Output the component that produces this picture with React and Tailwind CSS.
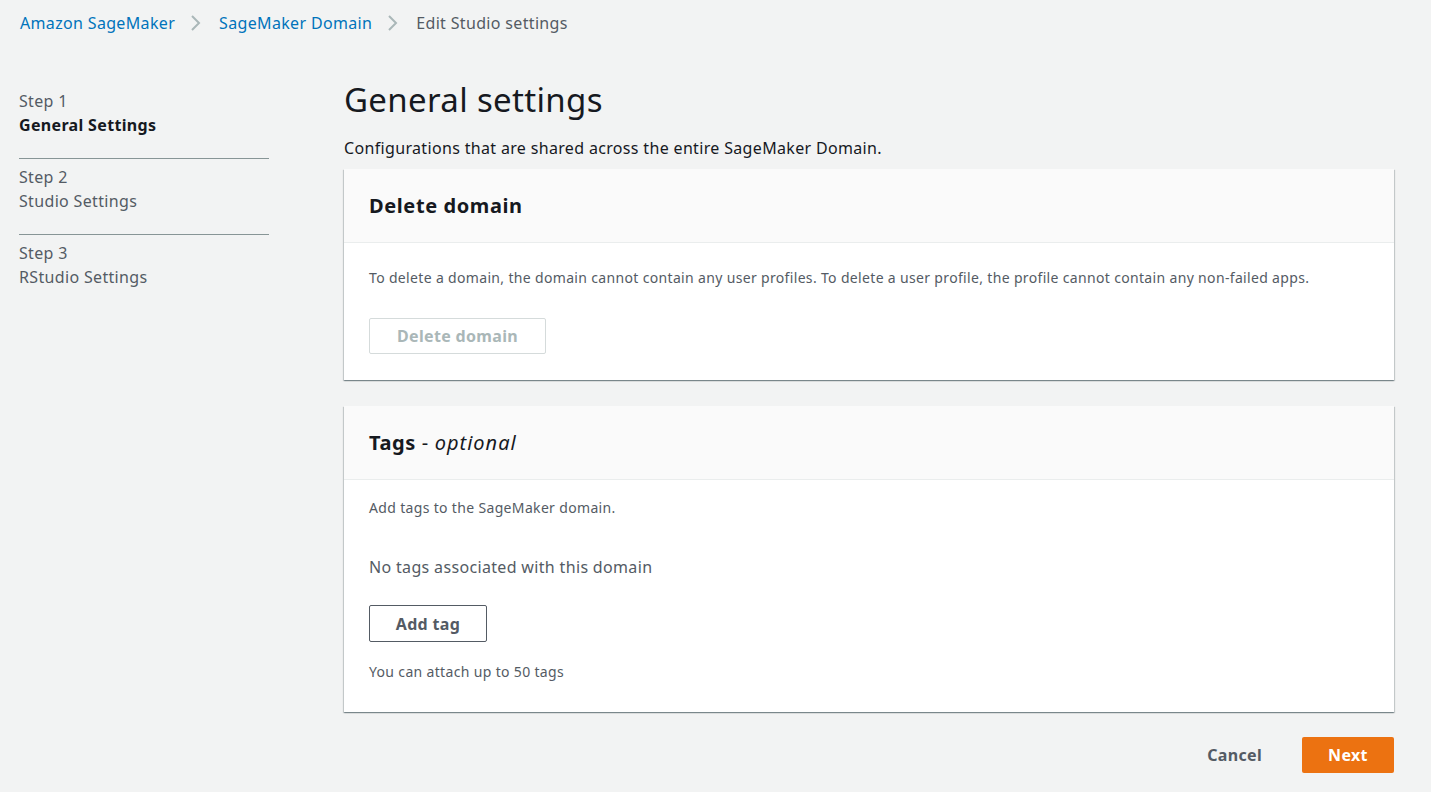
export default function App() {
  return (
    <div className="min-h-screen bg-[#f2f3f3] font-['Noto_Sans',sans-serif] tracking-[0.021em] text-[#16191f]">
      <nav className="flex items-center h-[46px] px-5 text-[16px] leading-[22px]">
        <span className="text-[#0073bb]">Amazon SageMaker</span>
        <Chevron />
        <span className="text-[#0073bb]">SageMaker Domain</span>
        <Chevron />
        <span className="text-[#545b64]">Edit Studio settings</span>
      </nav>

      <div className="flex pl-[19px] pr-[37px]">
        <aside className="w-[250px] shrink-0 pt-[43px] text-[16px] leading-[24px]">
          <div className="pb-[21px] border-b border-[#879596]">
            <div className="text-[#545b64]">Step 1</div>
            <div className="font-bold text-[#16191f]">General Settings</div>
          </div>
          <div className="pt-[6px] pb-[21px] border-b border-[#879596]">
            <div className="text-[#545b64]">Step 2</div>
            <div className="text-[#545b64]">Studio Settings</div>
          </div>
          <div className="pt-[6px]">
            <div className="text-[#545b64]">Step 3</div>
            <div className="text-[#545b64]">RStudio Settings</div>
          </div>
        </aside>

        <main className="ml-[75px] flex-1">
          <h1 className="mt-[32px] text-[33px] leading-[44px] font-normal">General settings</h1>
          <p className="mt-[15px] text-[16px] leading-[22px]">Configurations that are shared across the entire SageMaker Domain.</p>

          <section className="mt-[10px] bg-white shadow-[0_1px_1px_0_rgba(0,28,36,0.3),1px_1px_1px_0_rgba(0,28,36,0.15),-1px_1px_1px_0_rgba(0,28,36,0.15)]">
            <div className="bg-[#fafafa] border-b border-[#eaeded] h-[74px] flex items-center px-[25px]">
              <h2 className="text-[20px] font-bold leading-[28px] tracking-[0.03em]">Delete domain</h2>
            </div>
            <div className="px-[25px] pt-[25px] pb-[26px]">
              <p className="text-[14px] leading-[20px] text-[#545b64]">
                To delete a domain, the domain cannot contain any user profiles. To delete a user profile, the profile cannot contain any non-failed apps.
              </p>
              <button className="mt-[30px] h-[36px] w-[177px] border border-[#d5dbdb] rounded-[2px] bg-white text-[16px] font-bold text-[#aab7b8]">
                Delete domain
              </button>
            </div>
          </section>

          <section className="mt-[26px] bg-white shadow-[0_1px_1px_0_rgba(0,28,36,0.3),1px_1px_1px_0_rgba(0,28,36,0.15),-1px_1px_1px_0_rgba(0,28,36,0.15)]">
            <div className="bg-[#fafafa] border-b border-[#eaeded] h-[74px] flex items-center px-[25px]">
              <h2 className="text-[20px] font-bold leading-[28px] tracking-[0.03em]">
                Tags <span className="font-normal">-</span> <span className="font-normal italic tracking-[0.05em]">optional</span>
              </h2>
            </div>
            <div className="px-[25px] pt-[18px] pb-[30px]">
              <p className="text-[14px] leading-[20px] text-[#545b64]">Add tags to the SageMaker domain.</p>
              <p className="mt-[38px] text-[16px] leading-[22px] text-[#545b64]">No tags associated with this domain</p>
              <button className="mt-[27px] h-[37px] w-[118px] border border-[#545b64] rounded-[2px] bg-white text-[16px] font-bold text-[#545b64]">
                Add tag
              </button>
              <p className="mt-[20px] text-[14px] leading-[20px] text-[#545b64]">You can attach up to 50 tags</p>
            </div>
          </section>

          <div className="flex justify-end items-center mt-[25px]">
            <button className="text-[16px] font-bold text-[#545b64] px-5 h-[36px]">Cancel</button>
            <button className="ml-[20px] h-[36px] w-[92px] bg-[#ec7211] rounded-[2px] text-white text-[16px] font-bold">Next</button>
          </div>
        </main>
      </div>
    </div>
  )
}

function Chevron() {
  return (
    <svg className="ml-[15px] mr-[17px]" width="12" height="16" viewBox="0 0 12 16" fill="none">
      <path d="M2 1l7 7-7 7" stroke="#aab7b8" strokeWidth="2" />
    </svg>
  )
}
